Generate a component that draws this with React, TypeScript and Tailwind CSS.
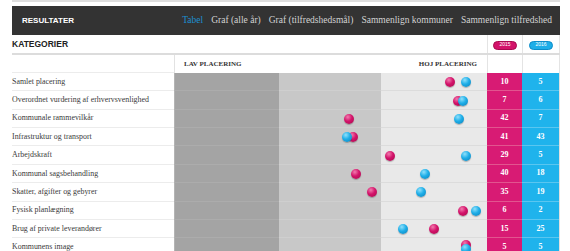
import React from "react";

type Row = {
  label: string;
  p: number;
  b: number;
  px: number;
  bx: number;
  pdy?: number;
  bdy?: number;
};

const rows: Row[] = [
  { label: "Samlet placering", p: 10, b: 5, px: 276, bx: 292 },
  { label: "Overordnet vurdering af erhvervsvenlighed", p: 7, b: 6, px: 284, bx: 289 },
  { label: "Kommunale rammevilkår", p: 42, b: 7, px: 175, bx: 285 },
  { label: "Infrastruktur og transport", p: 41, b: 43, px: 179, bx: 173 },
  { label: "Arbejdskraft", p: 29, b: 5, px: 216, bx: 292 },
  { label: "Kommunal sagsbehandling", p: 40, b: 18, px: 182, bx: 251 },
  { label: "Skatter, afgifter og gebyrer", p: 35, b: 19, px: 198, bx: 247 },
  { label: "Fysisk planlægning", p: 6, b: 2, px: 289, bx: 302 },
  { label: "Brug af private leverandører", p: 15, b: 25, px: 260, bx: 229 },
  { label: "Kommunens image", p: 5, b: 5, px: 292, bx: 292, pdy: -2, bdy: 2 },
];

function Dot({ x, dy = 0, color }: { x: number; dy?: number; color: "pink" | "blue" }) {
  const cls =
    color === "pink"
      ? "bg-[radial-gradient(circle_at_38%_30%,#f27aae_0%,#d3136a_45%,#a80a4e_100%)]"
      : "bg-[radial-gradient(circle_at_38%_30%,#8fe0fb_0%,#1eaee8_45%,#0d7fb8_100%)]";
  return (
    <span
      className={`absolute top-1/2 w-[10px] h-[10px] rounded-full shadow-[0_1px_1px_rgba(0,0,0,0.25)] ${cls}`}
      style={{ left: x - 5, marginTop: -5 + dy }}
    />
  );
}

export default function App() {
  return (
    <div className="w-[570px] h-[251px] overflow-hidden bg-white font-['Liberation_Serif',serif] text-[#333]">
      <div className="ml-[12px] w-[548px]">
        <div className="h-[2px] bg-[#dedede]" />
        <div className="h-[4px]" />
        {/* dark header bar */}
        <div className="h-[29px] bg-[#333333] flex items-center pl-[10px] pr-[8px]">
          <span className="font-['Liberation_Sans',sans-serif] font-bold text-[8px] text-white pt-[1px]">
            RESULTATER
          </span>
          <nav className="ml-auto flex gap-[8px] text-[9.5px] text-[#d2d2d2]">
            <span className="text-[#1d8fd0]">Tabel</span>
            <span>Graf (alle år)</span>
            <span>Graf (tilfredshedsmål)</span>
            <span>Sammenlign kommuner</span>
            <span>Sammenlign tilfredshed</span>
          </nav>
        </div>
        {/* kategorier row */}
        <div className="flex h-[18px]">
          <div className="flex-1 flex items-center font-['Liberation_Sans',sans-serif] font-bold text-[8.5px] text-[#222]">
            KATEGORIER
          </div>
          <div className="w-[35px] border-l border-[#e4e4e4] flex items-center justify-center pt-[2px]">
            <span className="w-[24px] h-[9px] rounded-full bg-[#d3136a] border border-[#a80a4e] flex items-center justify-center font-['Liberation_Sans',sans-serif] text-[5px] text-white">
              2015
            </span>
          </div>
          <div className="w-[38px] border-l border-r border-[#e4e4e4] flex items-center justify-center pt-[2px]">
            <span className="w-[24px] h-[9px] rounded-full bg-[#1eaee8] border border-[#0d8cc8] flex items-center justify-center font-['Liberation_Sans',sans-serif] text-[5px] text-white">
              2016
            </span>
          </div>
        </div>
        <div className="h-[2px] bg-[#dcdcdc]" />
        {/* column header row */}
        <div className="flex h-[18px]">
          <div className="w-[162px] border-b border-[#ececec]" />
          <div className="w-[313px] border-l border-[#e2e2e2] flex items-center justify-between pl-[9px] pr-[10px] text-[7px] font-bold text-[#333]">
            <span>LAV PLACERING</span>
            <span>HOJ PLACERING</span>
          </div>
          <div className="w-[35px] border-l border-[#e4e4e4]" />
          <div className="w-[38px] border-l border-r border-[#e4e4e4]" />
        </div>
        {/* data rows */}
        {rows.map((r) => (
          <div key={r.label} className="flex h-[18.37px]">
            <div className="w-[162px] border-b border-[#ececec] flex items-center text-[7.9px] text-[#3a3a3a]">
              {r.label}
            </div>
            <div className="relative w-[313px] flex">
              <div className="w-[105px] bg-[#a4a4a4] border-b border-l border-b-[#acacac] border-l-[#b4b4b4]" />
              <div className="w-[102px] bg-[#c8c8c8] border-b border-[#cfcfcf]" />
              <div className="w-[106px] bg-[#e9e9e9] border-b border-[#dcdcdc]" />
              <Dot x={r.px} dy={r.pdy} color="pink" />
              <Dot x={r.bx} dy={r.bdy} color="blue" />
            </div>
            <div className="w-[35px] bg-[#d81b74] border-b border-[#e2558f] flex items-center justify-center text-[8px] font-bold text-white">
              {r.p}
            </div>
            <div className="w-[37px] bg-[#1fb3ec] border-b border-[#5ac6f0] flex items-center justify-center text-[8px] font-bold text-white">
              {r.b}
            </div>
            <div className="w-[1px] bg-[#e0e0e0]" />
          </div>
        ))}
      </div>
    </div>
  );
}
